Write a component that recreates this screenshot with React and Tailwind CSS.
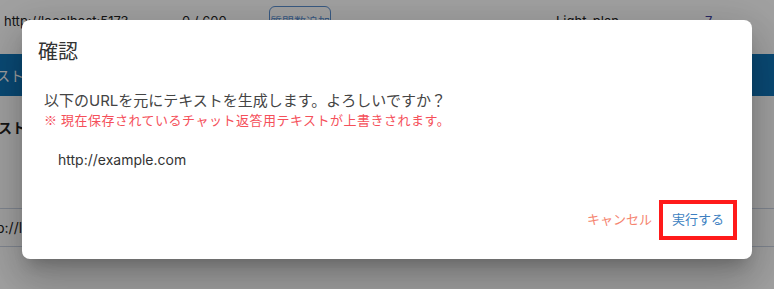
import React from 'react';

const jp = { fontFamily: 'Inter, "Noto Sans CJK JP", sans-serif' };
const cjk = { fontFamily: '"Noto Sans CJK JP", Inter, sans-serif' };

function Background() {
  return (
    <div className="w-[774px] h-[289px] bg-white overflow-hidden text-[13px] text-[#222]" style={jp}>
      <div className="h-[54px] relative">
        <span className="absolute left-[4px] top-[12px]">http://localhost:5173</span>
        <span className="absolute left-[182px] top-[12px]">0 / 600</span>
        <span className="absolute left-[269px] top-[6px] w-[62px] h-[34px] border border-[#5b8fd0] rounded-[6px] text-[#5b8fd0] flex items-center justify-center text-[12px]">質問数追加</span>
        <span className="absolute left-[556px] top-[12px]">Light_plan</span>
        <span className="absolute left-[705px] top-[12px] text-[#4040a0]">7</span>
      </div>
      <div className="h-[42px] bg-[#1075b9] text-white flex items-center text-[14px]">
        <span className="-ml-[4px]">スト自動生成</span>
      </div>
      <div className="pt-[21px] font-bold text-[14px] -ml-[2px]">ストーリー</div>
      <div className="mt-[70px] border-t border-[#cbd5e5]" />
      <div className="h-[37px] flex items-center -ml-[4px] text-[14px]">p://localhost</div>
      <div className="border-t border-[#cbd5e5]" />
    </div>
  );
}

export default function App() {
  return (
    <div className="relative w-[774px] h-[289px] overflow-hidden">
      <Background />
      <div className="absolute inset-0 bg-black/[0.37] flex justify-center pt-[20px]">
        <div
          className="w-[730px] h-[239px] bg-white rounded-[8px] shadow-[0_11px_15px_-7px_rgba(0,0,0,0.2),0_24px_38px_3px_rgba(0,0,0,0.14),0_9px_46px_8px_rgba(0,0,0,0.12)] flex flex-col"
          style={jp}
        >
          <div className="px-[16px] pt-[16px] h-[48px] text-[20px] leading-[32px] text-[#333]">確認</div>
          <div className="px-[22px] pt-[22px] flex-1">
            <p className="text-[15px] leading-[21px] text-[#444]">以下のURLを元にテキストを生成します。よろしいですか？</p>
            <p className="text-[13px] leading-[17px] text-[#f5505a] tracking-[0.5px]" style={cjk}>※ 現在保存されているチャット返答用テキストが上書きされます。</p>
            <p className="pl-[14px] pt-[22px] text-[14px] leading-[20px] text-[#333]">http://example.com</p>
          </div>
          <div className="flex justify-end items-center gap-[7px] pr-[15px] pb-[19px]">
            <button className="text-[13px] text-[#f5846f] h-[40px]">キャンセル</button>
            <button className="w-[78px] h-[40px] border-[4px] border-[#ff1a1a] text-[13px] text-[#3d7fc1] flex items-center justify-center">実行する</button>
          </div>
        </div>
      </div>
    </div>
  );
}
